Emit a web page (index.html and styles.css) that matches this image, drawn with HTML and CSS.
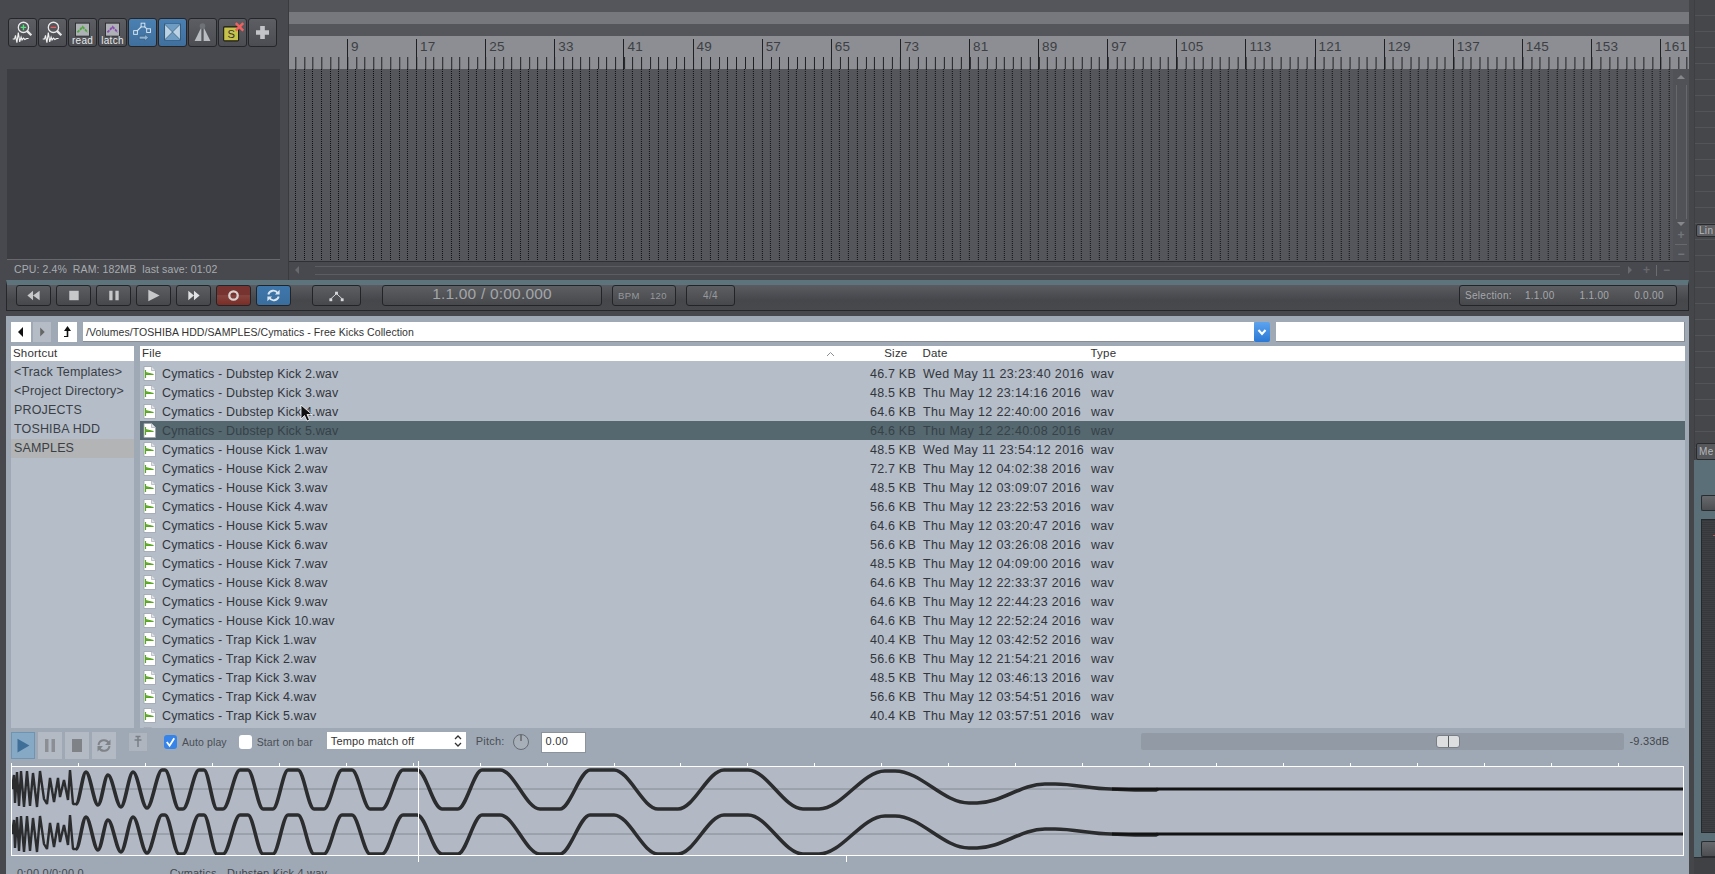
FILE: index.html
```html
<!DOCTYPE html>
<html lang="en">
<head>
<meta charset="utf-8">
<title>Media Explorer</title>
<link rel="stylesheet" href="styles.css">
</head>
<body>
<svg class="defs" width="0" height="0" aria-hidden="true">
  <defs>
    <symbol id="file" viewBox="0 0 13 15">
      <path d="M1 .5H8.5L12.5 4.5V14.5H1Z" fill="#fff" stroke="#9aa2ab" stroke-width=".8"/>
      <path d="M8.5 .5V4.5H12.5" fill="#dfe3e8" stroke="#9aa2ab" stroke-width=".6"/>
      <path d="M2.5 4V12M2.5 6.5L10.5 8.5H2.5Z" fill="#6cb52f" stroke="#5aa524" stroke-width="1.2"/>
    </symbol>
    <symbol id="zoomwave" viewBox="0 0 29 28">
      <path d="M4 21H6L7 17L8.500 25L10 14L11.500 24L13 19L14 22L15.500 20L17 21.500L19 20.500H21" fill="none" stroke="#f2f2f2" stroke-width="1.200"/>
      <circle cx="15.500" cy="8.500" r="5.500" fill="#54565b" stroke="#e8e8e8" stroke-width="1.400"/>
      <path d="M19.500 12.500L24 17" stroke="#e8e8e8" stroke-width="2.400"/>
    </symbol>
  </defs>
</svg>
<div class="app">
  <div class="main">
    <section class="top">
      <aside class="tcp">
        <div class="tools">
          <button class="tool"><svg viewBox="0 0 29 28"><use href="#zoomwave"/><path d="M12.500 8.500H18.500M15.500 5.500V11.500" stroke="#58e07c" stroke-width="1.500"/></svg></button>
          <button class="tool"><svg viewBox="0 0 29 28"><use href="#zoomwave"/><path d="M12.500 8.500H18.500" stroke="#f0585a" stroke-width="1.500"/></svg></button>
          <button class="tool labelled"><svg viewBox="0 0 29 28"><rect x="7" y="5" width="15" height="14" fill="#aeb2b6" stroke="#2b2c2f"/><path d="M9 15L12 12L14.500 9L17.500 12L20 15" fill="none" stroke="#4fa83b" stroke-width="2" stroke-dasharray="3 1"/></svg><span>read</span></button>
          <button class="tool labelled"><svg viewBox="0 0 29 28"><rect x="7" y="5" width="15" height="14" fill="#aeb2b6" stroke="#2b2c2f"/><path d="M9 15L12 12L14.500 9L17.500 12L20 15" fill="none" stroke="#8a4db0" stroke-width="2" stroke-dasharray="3 1"/></svg><span>latch</span></button>
          <button class="tool blue"><svg viewBox="0 0 29 28"><path d="M7 14L15 6L21 12" fill="none" stroke="#cfe0ee" stroke-width="1.200"/><rect x="5" y="12" width="4" height="4" fill="#4579a8" stroke="#dce8f2"/><rect x="13" y="4" width="4" height="4" fill="#4579a8" stroke="#dce8f2"/><rect x="19" y="10" width="4" height="4" fill="#4579a8" stroke="#dce8f2"/><path d="M11 18H17V16L21 19.500L17 23V21H11Z" fill="#8fb2d0" stroke="#2e5577" stroke-width=".6"/></svg></button>
          <button class="tool blue"><svg viewBox="0 0 29 28"><rect x="6" y="5" width="17" height="17" fill="#bcd3e6" stroke="#2f5270"/><path d="M6 5L14.500 13.500L23 5Z" fill="#6f9cc2"/><path d="M6 22L14.500 13.500L23 22Z" fill="#6f9cc2"/><path d="M6 5L23 22M23 5L6 22" stroke="#2f5270" stroke-width=".7"/></svg></button>
          <button class="tool"><svg viewBox="0 0 29 28"><path d="M6 23L13 9H16L23 23Z" fill="#b9bdc2"/><path d="M14.500 4V23" stroke="#55575c" stroke-width="2.500"/><circle cx="14.500" cy="7" r="3" fill="#6f7277"/></svg></button>
          <button class="tool"><svg viewBox="0 0 29 28"><rect x="5" y="8" width="16" height="15" rx="1" fill="#c6c24a" stroke="#1c1c10" stroke-width="1.200"/><text x="9" y="20" class="solo">S</text><path d="M18 4L26 12M26 4L18 12" stroke="#f2615f" stroke-width="2.600"/></svg></button>
          <button class="tool"><svg viewBox="0 0 29 28"><path d="M14.500 7V21M7.500 14H21.500" stroke="#c2c4c7" stroke-width="5"/></svg></button>
        </div>
        <div class="tcp-list"></div>
        <p class="perf">CPU: 2.4%&nbsp; RAM: 182MB&nbsp; last save: 01:02</p>
      </aside>
      <div class="arrange">
        <div class="lanes"><div class="lane"></div><div class="lane light"></div><div class="lane"></div></div>
        <div class="ruler">
          <span class="bar">9</span><span class="bar">17</span><span class="bar">25</span><span class="bar">33</span><span class="bar">41</span><span class="bar">49</span><span class="bar">57</span><span class="bar">65</span><span class="bar">73</span><span class="bar">81</span><span class="bar">89</span><span class="bar">97</span><span class="bar">105</span><span class="bar">113</span><span class="bar">121</span><span class="bar">129</span><span class="bar">137</span><span class="bar">145</span><span class="bar">153</span><span class="bar">161</span>
        </div>
        <div class="arrange-body">
          <div class="grid"></div>
          <div class="vscroll">
            <span class="tri up"></span>
            <span class="vtrack"></span>
            <span class="tri down"></span>
            <span class="vmark">+</span>
            <span class="vrule"></span>
            <span class="vmark">&minus;</span>
          </div>
        </div>
        <div class="hscroll">
          <span class="tri left"></span>
          <span class="htrack"></span>
          <span class="tri right"></span>
          <span class="hmark">+</span>
          <span class="hsep"></span>
          <span class="hmark">&minus;</span>
        </div>
      </div>
    </section>

    <section class="transport">
      <button class="tbtn"><svg viewBox="0 0 35 20"><path d="M11 10L17 5V15ZM17 10L24 5V15Z" fill="#c6c8ca"/></svg></button>
      <button class="tbtn"><svg viewBox="0 0 35 20"><rect x="13" y="5" width="10" height="10" fill="#c6c8ca"/></svg></button>
      <button class="tbtn"><svg viewBox="0 0 35 20"><path d="M13 5H16.500V15H13ZM19.500 5H23V15H19.500Z" fill="#c6c8ca"/></svg></button>
      <button class="tbtn"><svg viewBox="0 0 35 20"><path d="M12 4L24 10L12 16Z" fill="#c6c8ca"/></svg></button>
      <button class="tbtn"><svg viewBox="0 0 35 20"><path d="M12 5L18 10L12 15ZM18 5L24 10L18 15Z" fill="#e0e1e2"/></svg></button>
      <button class="tbtn rec"><svg viewBox="0 0 35 20"><circle cx="17.500" cy="10" r="4.500" fill="none" stroke="#d9d4d2" stroke-width="2.400"/></svg></button>
      <button class="tbtn sync"><svg viewBox="0 0 35 20"><path d="M12 9A5.500 5.500 0 0 1 22 7.500" fill="none" stroke="#dbe6ef" stroke-width="2"/><path d="M23 11A5.500 5.500 0 0 1 13 12.500" fill="none" stroke="#dbe6ef" stroke-width="2"/><path d="M24 4V9H19ZM11 16V11H16Z" fill="#dbe6ef"/></svg></button>
      <button class="tbtn env"><svg viewBox="0 0 49 20"><path d="M18 14L24.500 8L31 14" fill="none" stroke="#d8d9da"/><rect x="17" y="13" width="3" height="3" fill="#d8d9da"/><rect x="23" y="6" width="3" height="3" fill="#d8d9da"/><rect x="29" y="13" width="3" height="3" fill="#d8d9da"/></svg></button>
      <div class="tbox time">1.1.00 / 0:00.000</div>
      <div class="tbox bpm"><span>BPM</span><span>120</span></div>
      <div class="tbox sig">4/4</div>
      <div class="tbox sel"><span>Selection:</span><span>1.1.00</span><span>1.1.00</span><span>0.0.00</span></div>
    </section>

    <section class="browser">
      <div class="nav">
        <button class="navbtn"><svg viewBox="0 0 20 20"><path d="M12 5V15L7 10Z" fill="#111"/></svg></button>
        <button class="navbtn off"><svg viewBox="0 0 20 20"><path d="M8 5V15L13 10Z" fill="#666"/></svg></button>
        <button class="navbtn up"><svg viewBox="0 0 19 20"><path d="M9.500 4L13 9H10.300V15H6V14H8.700V9H6Z" fill="#111"/></svg></button>
        <div class="path">/Volumes/TOSHIBA HDD/SAMPLES/Cymatics - Free Kicks Collection</div>
        <button class="drop"><svg viewBox="0 0 16 20"><path d="M4.500 8L8 12L11.500 8" fill="none" stroke="#fff" stroke-width="2"/></svg></button>
        <div class="search"></div>
      </div>
      <div class="lists">
        <div class="shortcuts">
          <div class="head">Shortcut</div>
          <ul class="places">
            <li>&lt;Track Templates&gt;</li>
            <li>&lt;Project Directory&gt;</li>
            <li>PROJECTS</li>
            <li>TOSHIBA HDD</li>
            <li class="cur">SAMPLES</li>
          </ul>
        </div>
        <div class="files">
          <div class="head filehead">
            <span class="c-name">File</span>
            <span class="sort"><svg viewBox="0 0 9 6"><path d="M1 5L4.500 1.500L8 5" fill="none" stroke="#8a8f96"/></svg></span>
            <span class="c-size">Size</span>
            <span class="c-date">Date</span>
            <span class="c-type">Type</span>
          </div>
          <div class="rows">
            <div class="row"><svg class="ficon"><use href="#file"/></svg><span class="c-name">Cymatics - Dubstep Kick 2.wav</span><span class="c-size">46.7 KB</span><span class="c-date">Wed May 11 23:23:40 2016</span><span class="c-type">wav</span></div>
            <div class="row"><svg class="ficon"><use href="#file"/></svg><span class="c-name">Cymatics - Dubstep Kick 3.wav</span><span class="c-size">48.5 KB</span><span class="c-date">Thu May 12 23:14:16 2016</span><span class="c-type">wav</span></div>
            <div class="row"><svg class="ficon"><use href="#file"/></svg><span class="c-name">Cymatics - Dubstep Kick 4.wav</span><span class="c-size">64.6 KB</span><span class="c-date">Thu May 12 22:40:00 2016</span><span class="c-type">wav</span></div>
            <div class="row picked"><svg class="ficon"><use href="#file"/></svg><span class="c-name">Cymatics - Dubstep Kick 5.wav</span><span class="c-size">64.6 KB</span><span class="c-date">Thu May 12 22:40:08 2016</span><span class="c-type">wav</span></div>
            <div class="row"><svg class="ficon"><use href="#file"/></svg><span class="c-name">Cymatics - House Kick 1.wav</span><span class="c-size">48.5 KB</span><span class="c-date">Wed May 11 23:54:12 2016</span><span class="c-type">wav</span></div>
            <div class="row"><svg class="ficon"><use href="#file"/></svg><span class="c-name">Cymatics - House Kick 2.wav</span><span class="c-size">72.7 KB</span><span class="c-date">Thu May 12 04:02:38 2016</span><span class="c-type">wav</span></div>
            <div class="row"><svg class="ficon"><use href="#file"/></svg><span class="c-name">Cymatics - House Kick 3.wav</span><span class="c-size">48.5 KB</span><span class="c-date">Thu May 12 03:09:07 2016</span><span class="c-type">wav</span></div>
            <div class="row"><svg class="ficon"><use href="#file"/></svg><span class="c-name">Cymatics - House Kick 4.wav</span><span class="c-size">56.6 KB</span><span class="c-date">Thu May 12 23:22:53 2016</span><span class="c-type">wav</span></div>
            <div class="row"><svg class="ficon"><use href="#file"/></svg><span class="c-name">Cymatics - House Kick 5.wav</span><span class="c-size">64.6 KB</span><span class="c-date">Thu May 12 03:20:47 2016</span><span class="c-type">wav</span></div>
            <div class="row"><svg class="ficon"><use href="#file"/></svg><span class="c-name">Cymatics - House Kick 6.wav</span><span class="c-size">56.6 KB</span><span class="c-date">Thu May 12 03:26:08 2016</span><span class="c-type">wav</span></div>
            <div class="row"><svg class="ficon"><use href="#file"/></svg><span class="c-name">Cymatics - House Kick 7.wav</span><span class="c-size">48.5 KB</span><span class="c-date">Thu May 12 04:09:00 2016</span><span class="c-type">wav</span></div>
            <div class="row"><svg class="ficon"><use href="#file"/></svg><span class="c-name">Cymatics - House Kick 8.wav</span><span class="c-size">64.6 KB</span><span class="c-date">Thu May 12 22:33:37 2016</span><span class="c-type">wav</span></div>
            <div class="row"><svg class="ficon"><use href="#file"/></svg><span class="c-name">Cymatics - House Kick 9.wav</span><span class="c-size">64.6 KB</span><span class="c-date">Thu May 12 22:44:23 2016</span><span class="c-type">wav</span></div>
            <div class="row"><svg class="ficon"><use href="#file"/></svg><span class="c-name">Cymatics - House Kick 10.wav</span><span class="c-size">64.6 KB</span><span class="c-date">Thu May 12 22:52:24 2016</span><span class="c-type">wav</span></div>
            <div class="row"><svg class="ficon"><use href="#file"/></svg><span class="c-name">Cymatics - Trap Kick 1.wav</span><span class="c-size">40.4 KB</span><span class="c-date">Thu May 12 03:42:52 2016</span><span class="c-type">wav</span></div>
            <div class="row"><svg class="ficon"><use href="#file"/></svg><span class="c-name">Cymatics - Trap Kick 2.wav</span><span class="c-size">56.6 KB</span><span class="c-date">Thu May 12 21:54:21 2016</span><span class="c-type">wav</span></div>
            <div class="row"><svg class="ficon"><use href="#file"/></svg><span class="c-name">Cymatics - Trap Kick 3.wav</span><span class="c-size">48.5 KB</span><span class="c-date">Thu May 12 03:46:13 2016</span><span class="c-type">wav</span></div>
            <div class="row"><svg class="ficon"><use href="#file"/></svg><span class="c-name">Cymatics - Trap Kick 4.wav</span><span class="c-size">56.6 KB</span><span class="c-date">Thu May 12 03:54:51 2016</span><span class="c-type">wav</span></div>
            <div class="row"><svg class="ficon"><use href="#file"/></svg><span class="c-name">Cymatics - Trap Kick 5.wav</span><span class="c-size">40.4 KB</span><span class="c-date">Thu May 12 03:57:51 2016</span><span class="c-type">wav</span></div>
            <div class="row"><svg class="ficon"><use href="#file"/></svg></div>
          </div>
          <svg class="cursor" viewBox="0 0 12 18"><path d="M1 1V15L4.500 11.500L7 17L9.500 16L7 10.500H12Z" fill="#111" stroke="#fff" stroke-width=".8"/></svg>
        </div>
      </div>

      <div class="pbar">
        <button class="pbtn on"><svg viewBox="0 0 24 27"><path d="M6 6L19 13.500L6 21Z" fill="#3f6f99"/></svg></button>
        <button class="pbtn"><svg viewBox="0 0 24 27"><path d="M7 7H10.500V20H7ZM13.500 7H17V20H13.500Z" fill="#8b8f94"/></svg></button>
        <button class="pbtn"><svg viewBox="0 0 24 27"><rect x="7" y="7" width="10" height="13" fill="#7f8388"/></svg></button>
        <button class="pbtn"><svg viewBox="0 0 24 27"><path d="M6.500 13A5.500 5.500 0 0 1 17 11.500M17.500 14A5.500 5.500 0 0 1 7 15.500" fill="none" stroke="#7f8388" stroke-width="2"/><path d="M18.500 7.500V13H13ZM5.500 19.500V14H11Z" fill="#7f8388"/></svg></button>
        <button class="pin"><svg viewBox="0 0 18 18"><path d="M9 3V14M5.500 7H12.500M6.500 3.500H11.500" fill="none" stroke="#7a7f85" stroke-width="1.500"/></svg></button>
        <label class="check"><span class="box ticked"><svg viewBox="0 0 14 14"><path d="M3 7L6 11L11 3" fill="none" stroke="#fff" stroke-width="2"/></svg></span>Auto play</label>
        <label class="check second"><span class="box"></span>Start on bar</label>
        <div class="select">Tempo match off<svg viewBox="0 0 10 16"><path d="M2 6L5 3L8 6M2 10L5 13L8 10" fill="none" stroke="#333" stroke-width="1.300"/></svg></div>
        <span class="pitch">Pitch:</span>
        <svg class="knob" viewBox="0 0 18 20"><circle cx="9" cy="10" r="7.500" fill="#a7afb9" stroke="#666b71"/><path d="M9 3V9" stroke="#444"/></svg>
        <div class="pitchval">0.00</div>
        <div class="vol"><span class="thumb"></span></div>
        <span class="db">-9.33dB</span>
      </div>

      <div class="preview">
        <div class="wticks"></div>
        <div class="wave">
          <svg viewBox="0 0 1671 88" preserveAspectRatio="none">
            <defs>
              <g id="chan">
                <path class="mid" d="M0 22H1671"/>
                <path class="noise" d="M0 22L2 8L3 36L5 5L7 39L9 4L12 40L15 4L18 39L21 6L25 40L28 4L32 32L35 37L38 11L42 35L46 11L48 30L52 13L56 33L58 3L61 37L64 37"/>
                <path class="trace" d="M64 37C67.500 37 70.500 5 74 5C78 5 82 38 86 38C89.500 38 92.500 8 96 8C100.500 8 104.500 40 109 40C113 40 117 5 121 5C126 5 130 41 135 41C140 41 145 3 150 3H153C158 3 162 42 167 42H171C176.600 42 181.400 3 187 3H192C196.500 3 200.500 42 205 42H211C217 42 222 3 228 3H236C241 3 246 42 251 42H261C266 42 271 3 276 3H286C291.600 3 296.400 42 302 42H312C318 42 324 3 330 3H340C346 3 352 42 358 42H370C377 42 384 3 391 3H405C414 3 421 42 430 42H446C454 42 462 3 470 3H488C502 3 514 42 528 42H548C558 42 568 3 578 3H602C617 3 631 42 646 42H666C682 42 696 3 712 3H736C755 3 772 42 791 42H807C830 42 850 4 873 4H883C909 4 931 36 957 36H965C989 36 1009 17 1033 17H1043C1063 17 1079 22 1099 22L1123 23H1144L1146 22"/>
                <path class="tail" d="M1100 22H1671"/>
              </g>
            </defs>
            <use href="#chan"/>
            <use href="#chan" y="45"/>
          </svg>
          <span class="playhead"></span>
        </div>
        <div class="wfoot"><span class="foot-mark"></span></div>
        <div class="pstatus"><span>0:00.0/0:00.0</span><span>Cymatics - Dubstep Kick 4.wav</span></div>
      </div>
    </section>
  </div>

  <aside class="side">
    <div class="side-top">
      <button class="sbtn lin">Lin</button>
      <button class="sbtn me">Me</button>
    </div>
    <div class="side-teal">
      <span class="mbtn"></span>
      <div class="meter"><span class="red"></span></div>
      <span class="mbtn"></span>
    </div>
    <div class="side-foot"></div>
  </aside>
</div>
</body>
</html>
```

FILE: styles.css
```css
* { box-sizing: border-box; }
html, body { margin: 0; padding: 0; }
body {
  width: 1715px;
  height: 874px;
  overflow: hidden;
  background: #46484d;
  font-family: "Liberation Sans", Arial, sans-serif;
  font-size: 12px;
  color: #33373c;
}
button { padding: 0; margin: 0; font: inherit; display: block; }
svg { display: block; }
.defs { position: absolute; }

.app { display: flex; width: 1715px; height: 874px; }
.main { width: 1689px; flex: none; display: flex; flex-direction: column; }

/* ---- upper area ---- */
.top { display: flex; height: 280px; flex: none; }
.tcp { width: 289px; flex: none; padding: 18px 8px 0 7px; border-right: 1px solid #3a3b3f; display: flex; flex-direction: column; background: #47494e; }
.tools { display: flex; gap: 1px; margin-left: 1px; height: 28px; }
.tool { position: relative; width: 29px; height: 29px; border: 1px solid #25262a; border-radius: 3px; background: linear-gradient(#5c5e63, #4b4d52); color: #eee; overflow: hidden; }
.tool svg { width: 27px; height: 27px; }
.tool.blue { background: linear-gradient(#4a80b2, #3f6f9d); }
.tool.labelled svg { height: 27px; margin-top: -2px; }
.tool.labelled span { position: absolute; left: 0; right: 0; bottom: 0; text-align: center; font-size: 10px; line-height: 11px; letter-spacing: .3px; color: #e8e9ea; }
.solo { font: 12px "Liberation Sans", sans-serif; fill: #333; }
.tcp-list { margin-top: 23px; height: 191px; background: #3c3d42; flex: none; border-bottom: 1px solid #66686c; }
.perf { margin: 0; padding: 2px 0 0 7px; font-size: 10.5px; line-height: 14px; letter-spacing: .1px; color: #a9acb0; }

.arrange { flex: 1; min-width: 0; display: flex; flex-direction: column; }
.lanes { height: 36px; flex: none; }
.lane { height: 12px; background: #54565b; }
.lane.light { background: #76787d; }
.ruler {
  height: 33px;
  flex: none;
  display: flex;
  padding-left: 58px;
  overflow: hidden;
  background-color: #8c8e93;
  background-image: repeating-linear-gradient(90deg, #1f2023 0 1px, transparent 1px 8.64px);
  background-size: 1399.68px 12px;
  background-position: 6px 100%;
  background-repeat: repeat-x;
}
.bar { flex: 0 0 69.12px; margin-top: 3px; padding-left: 3px; border-left: 1px solid #1f2023; font-size: 13.5px; line-height: 16px; color: #3d3f44; letter-spacing: .2px; }

.arrange-body { height: 192px; flex: none; display: flex; background: #54565b; }
.grid {
  flex: 1;
  background-color: #54565b;
  background-image:
    repeating-linear-gradient(0deg, #54565b 0 1px, transparent 1px 2px),
    repeating-linear-gradient(90deg, #0e0f12 0 1px, transparent 1px 8.64px);
  background-size: 100% 100%, 1399.68px 100%;
  background-position: 0 0, 6px 0;
  background-repeat: repeat-x;
}
.vscroll { width: 16px; flex: none; background: #505257; display: flex; flex-direction: column; align-items: center; padding-top: 6px; color: #73757a; }
.vtrack { flex: 1; width: 11px; margin: 6px 0 3px; border-left: 1px solid #66686c; border-right: 1px solid #66686c; }
.vmark { font-size: 12px; line-height: 14px; margin-top: 2px; font-weight: bold; }
.vrule { width: 12px; height: 1px; background: #66686c; margin: 2px 0 0; }
.tri { width: 0; height: 0; flex: none; display: block; border-style: solid; border-color: transparent; }
.tri.up { border-width: 0 4px 4px; border-bottom-color: #85878b; }
.tri.down { border-width: 4px 4px 0; border-top-color: #85878b; }
.tri.left { border-width: 4px 4px 4px 0; border-right-color: #68696e; margin-left: 6px; }
.tri.right { border-width: 4px 0 4px 4px; border-left-color: #68696e; }
.hscroll { height: 19px; flex: none; border-top: 1px solid #2f3033; display: flex; align-items: center; background: #47494e; color: #66686c; padding: 0 16px 2px 0; }
.htrack { flex: 1; height: 9px; margin: 0 8px 0 16px; border-top: 1px solid #5b5d62; border-bottom: 1px solid #5b5d62; }
.hmark { width: 13px; text-align: center; font-weight: bold; font-size: 12px; line-height: 14px; margin-left: 3px; }
.tri.right + .hmark { margin-left: 8px; }
.hsep { width: 1px; height: 11px; background: #6a6c70; margin-left: 3px; }

/* ---- transport ---- */
.transport {
  margin: 0 0 0 6px;
  height: 31px;
  flex: none;
  display: flex;
  align-items: flex-start;
  gap: 5px;
  padding: 0 0 0 9px;
  border: 1px solid #26272a;
  border-top: 5px solid #5d747c;
  border-width: 5px 1px 1px;
  background: linear-gradient(#5a5c61 0, #45474b 60%, #47494d 100%);
  color: #c1c3c5;
}
.tbtn, .tbox { height: 21px; border: 1px solid #232428; border-radius: 3px; background: linear-gradient(#5c5e62, #46484c); flex: none; }
.tbtn { width: 35px; }
.tbtn svg { width: 33px; height: 19px; }
.tbtn.rec { background: linear-gradient(#77332f 0 45%, #83423d 45% 55%, #7b2c26); }
.tbtn.sync { background: linear-gradient(#3f77ab, #3a6d9e); }
.tbtn.env { width: 49px; margin-left: 16px; }
.tbtn.env svg { width: 47px; }
.tbox { display: flex; align-items: center; }
.time { width: 220px; margin-left: 16px; padding-bottom: 4px; justify-content: center; font-size: 15.5px; color: #a3a6a9; letter-spacing: .2px; }
.bpm { width: 64px; margin-left: 5px; justify-content: space-between; padding: 0 8px 0 5px; font-size: 9.5px; color: #97999c; letter-spacing: .4px; }
.sig { width: 49px; margin-left: 5px; justify-content: center; font-size: 10px; color: #97999c; letter-spacing: .4px; }
.sel { width: 218px; margin-left: auto; margin-right: 11px; padding: 0 0 0 5px; gap: 25px; font-size: 10px; color: #a6a8ab; letter-spacing: .3px; }
.sel span:first-child { margin-right: -12px; }

/* ---- media browser ---- */
.browser { margin: 5px 0 0 6px; flex: 1; min-height: 0; background: #9fa9b5; padding: 6px 0 0 0; overflow: hidden; display: flex; flex-direction: column; }
.nav { display: flex; height: 20px; flex: none; padding: 0 4px 0 5px; gap: 2px; }
.navbtn { width: 20px; height: 20px; background: #fff; border: 0; }
.navbtn.off { width: 18px; background: #b5bcc6; }
.navbtn.up { width: 19px; margin-left: 5px; }
.navbtn svg { width: 100%; height: 100%; }
.path { margin-left: 4px; width: 1171px; background: #fff; border-bottom: 1px solid #888d93; font-size: 10.5px; line-height: 21px; padding-left: 3px; letter-spacing: .07px; color: #333; }
.drop { width: 16px; height: 20px; background: linear-gradient(#5da4ee, #2a78d6); border: 0; border-radius: 2px; margin-left: -2px; }
.drop svg { width: 16px; height: 20px; }
.search { margin-left: 4px; flex: 1; background: #fff; border-right: 1px solid #888d93; border-bottom: 1px solid #888d93; }

.lists { display: flex; margin-top: 4px; height: 382px; flex: none; padding: 0 4px 0 5px; gap: 6px; }
.shortcuts { width: 123px; flex: none; background: #b5bdc9; }
.head { height: 15px; background: #fff; font-size: 11.5px; line-height: 15px; letter-spacing: .2px; padding-left: 2px; color: #333; }
.places { list-style: none; margin: 1.500px 0 0; padding: 0; font-size: 12.5px; letter-spacing: .15px; color: #3a3f45; }
.places li { height: 19px; line-height: 19px; padding-left: 3px; white-space: nowrap; }
.places .cur { background: #b2b4b6; }

.files { position: relative; flex: 1; min-width: 0; background: #b5bdc9; overflow: hidden; }
.filehead { display: flex; }
.rows { padding-top: 3px; }
.row { display: flex; align-items: center; height: 19px; padding-left: 3px; font-size: 12.5px; letter-spacing: .14px; white-space: nowrap; color: #32363b; }
.row.picked { background: #55686f; color: #364148; }
.ficon { width: 13px; height: 15px; flex: none; margin-right: 6px; }
.c-name { flex: 0 0 694px; }
.c-size { flex: 0 0 60px; text-align: right; letter-spacing: .22px; }
.c-date { flex: 0 0 168px; margin-left: 7px; letter-spacing: .36px; }
.c-type { flex: 1; letter-spacing: .22px; }
.filehead .c-name { flex-basis: 684px; }
.filehead .sort { flex: 0 0 28px; padding-top: 5px; }
.filehead .sort svg { width: 9px; height: 6px; }
.filehead .c-size { flex-basis: 60px; margin-left: -2px; padding-right: 4.500px; }
.filehead .c-date { margin-left: 10.500px; letter-spacing: .2px; }
.cursor { position: absolute; left: 160px; top: 58px; width: 12px; height: 18px; }

/* ---- preview bar ---- */
.pbar { display: flex; align-items: flex-start; height: 32px; flex: none; padding: 4px 0 0 5px; gap: 3px; }
.pbtn { width: 24px; height: 27px; border: 0; background: #b3bac4; }
.pbtn svg { width: 24px; height: 27px; }
.pbtn.on { background: #86a9c6; border: 1px solid #6e94b4; }
.pbtn.on svg { width: 22px; height: 25px; }
.pin { width: 18px; height: 18px; border: 0; background: #aeb5bf; margin: 1px 0 0 10px; }
.pin svg { width: 18px; height: 18px; }
.check { display: flex; align-items: center; height: 17px; margin: 1px 0 0 14px; font-size: 10.5px; letter-spacing: .1px; color: #494e54; }
.check.second { margin-left: 9px; }
.box { width: 13px; height: 14px; margin-right: 5px; border-radius: 3px; background: #fff; flex: none; }
.box svg { width: 13px; height: 14px; }
.box.ticked { background: #3684ea; }
.select { display: flex; align-items: center; justify-content: space-between; width: 139px; height: 17px; margin: 0 0 0 11px; padding: 0 3px 0 4px; background: #fff; font-size: 11px; letter-spacing: .15px; color: #333; }
.select svg { width: 10px; height: 16px; }
.pitch { margin: 2px 0 0 7px; font-size: 11px; line-height: 14px; letter-spacing: .2px; color: #494e54; }
.knob { width: 18px; height: 20px; margin-left: 5px; }
.pitchval { width: 45px; height: 21px; margin-left: 8px; background: #fff; border: 1px solid #8d939a; font-size: 11px; line-height: 17px; padding-left: 3px; letter-spacing: .3px; color: #333; }
.vol { position: relative; width: 483px; height: 17px; margin: 1px 0 0 552px; border-radius: 2px; background: #929aa5; }
.thumb { position: absolute; left: 295px; top: 2px; width: 24px; height: 13px; border: 1px solid #7a7f86; border-radius: 3px; background: linear-gradient(90deg, #dcdee0 0 48%, #55585c 48% 53%, #dcdee0 53%); }
.db { margin: 2px 0 0 2px; font-size: 11px; line-height: 14px; letter-spacing: .2px; color: #42464b; }

/* ---- waveform ---- */
.preview { position: relative; padding: 0 0 0 5px; }
.wticks { height: 6px; margin-left: 0; width: 1672px; background-image: repeating-linear-gradient(90deg, #fff 0 1px, transparent 1px 66.95px); background-size: 100% 3px; background-position: 0 100%; background-repeat: no-repeat; }
.wave { position: relative; width: 1673px; height: 90px; border: 1px solid #fff; background: #b2b9c5; }
.wave svg { width: 100%; height: 100%; }
.mid { stroke: #848a91; stroke-width: 1; fill: none; }
.trace { fill: none; stroke: #2b2c2d; stroke-width: 3.6; stroke-linejoin: round; }
.noise { fill: none; stroke: #2b2c2d; stroke-width: 2.4; stroke-linejoin: bevel; }
.tail { fill: none; stroke: #131313; stroke-width: 3; }
.playhead { position: absolute; left: 406px; top: -6px; width: 1px; height: 101px; background: #fff; }
.wfoot { position: relative; height: 6px; }
.foot-mark { position: absolute; left: 835px; top: 0; width: 1px; height: 6px; background: #fff; }
.pstatus { display: flex; gap: 86px; padding: 4px 0 0 6px; font-size: 11px; line-height: 14px; color: #42464b; letter-spacing: .2px; }

/* ---- right strip ---- */
.side { flex: 1; display: flex; flex-direction: column; padding-left: 5px; background: #44464a; }
.side-top {
  height: 460px;
  flex: none;
  padding: 224px 0 0 1px;
  overflow: hidden;
  background-image: repeating-linear-gradient(180deg, #46474b 0 15px, #525458 15px 16px);
  border-left: 1px solid #3e3f43;
}
.sbtn { width: 22px; height: 13px; border: 1px solid #2a2b2e; border-radius: 2px; background: #5d5f63; color: #b5b7ba; font-size: 10px; line-height: 11px; text-align: left; padding-left: 2px; white-space: nowrap; overflow: hidden; letter-spacing: .3px; }
.sbtn.me { height: 17px; margin-top: 206px; background: #56585c; line-height: 15px; }
.side-teal { height: 397px; flex: none; background: #5a6f77; padding: 35px 0 0 7px; display: flex; flex-direction: column; }
.mbtn { height: 16px; flex: none; border: 1px solid #2a2b2e; border-right: 0; border-radius: 2px 0 0 2px; background: linear-gradient(#67696d, #4c4e52); }
.meter { position: relative; height: 314px; margin: 8px 0; flex: none; border: 1px solid #26272a; border-right: 0; background: repeating-linear-gradient(0deg, #3e3f42 0 1px, #37383b 1px 2px); }
.red { position: absolute; left: 11px; top: 15px; width: 3px; height: 1px; background: #b05a60; }
.side-foot { flex: 1; background: #3f4145; border-top: 1px solid #2b2c2f; }
```
